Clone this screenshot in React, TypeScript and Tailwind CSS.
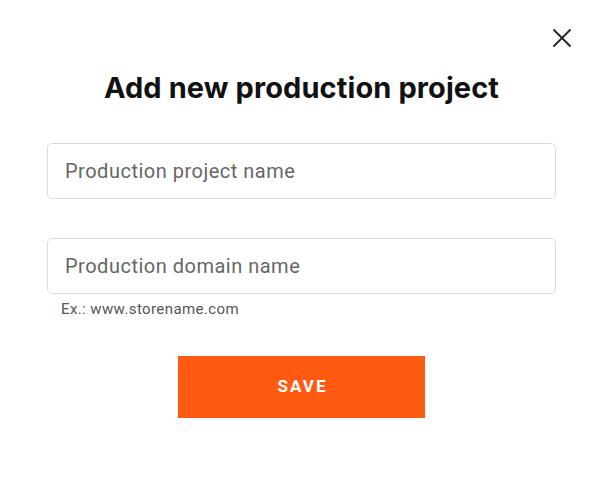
import React from "react";

export default function App() {
  return (
    <div className="w-[604px] h-[490px] bg-white relative" style={{ fontFamily: "Roboto, 'Liberation Sans', sans-serif" }}>
      <button className="absolute left-[552px] top-[28px] w-[20px] h-[20px] flex items-center justify-center">
        <svg width="20" height="20" viewBox="0 0 20 20" fill="none" stroke="#222" strokeWidth="1.8" strokeLinecap="round">
          <path d="M2 2 L18 18 M18 2 L2 18" />
        </svg>
      </button>
      <div className="flex flex-col items-center pt-[70px]">
        <h1 className="text-[29px] leading-[36px] font-bold text-[#111] tracking-[0.1px] -ml-[1px]" style={{ fontFamily: "Inter, 'Liberation Sans', sans-serif" }}>
          Add new production project
        </h1>
        <div className="w-[509px] mt-[37px] flex flex-col self-start ml-[47px]">
          <input
            className="h-[56px] border border-[#dcdcdc] rounded-[5px] px-[17px] text-[20px] tracking-[0.5px] text-[#222] placeholder:text-[#666] outline-none"
            placeholder="Production project name"
          />
          <input
            className="h-[56px] mt-[39px] border border-[#dcdcdc] rounded-[5px] px-[17px] text-[20px] tracking-[0.5px] text-[#222] placeholder:text-[#666] outline-none"
            placeholder="Production domain name"
          />
          <div className="pl-[14px] mt-[6px] text-[15px] leading-[18px] text-[#555] tracking-[0.4px]">Ex.: www.storename.com</div>
        </div>
        <button className="mt-[38px] self-start ml-[178px] w-[247px] h-[62px] bg-[#ff5a12] text-white font-bold text-[17px] tracking-[2px] pl-[2px]">
          SAVE
        </button>
      </div>
    </div>
  );
}
